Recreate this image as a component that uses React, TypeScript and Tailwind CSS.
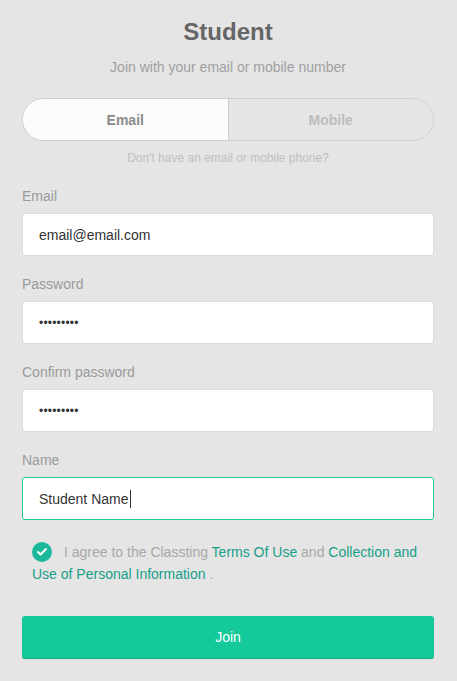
import { Check } from 'lucide-react'

const font = { fontFamily: '"Liberation Sans", Arial, sans-serif' }

function Field({
  label,
  value,
  type = 'text',
  focused = false,
}: {
  label: string
  value: string
  type?: string
  focused?: boolean
}) {
  return (
    <div className="mt-[18px] first:mt-[19px]">
      <label className="block text-[14px] leading-[20px] text-[#9a9a9a] mb-[7px]">{label}</label>
      <div
        className={`h-[43px] rounded-[3px] bg-white border flex items-center px-[16px] ${
          focused ? 'border-[#1fcb9c]' : 'border-[#dcdcdc]'
        }`}
      >
        {type === 'password' ? (
          <span className="text-[12px] text-[#333] tracking-[0.2px] leading-none pt-[1px]">•••••••••</span>
        ) : (
          <span className="text-[14px] text-[#333] flex items-center pt-[1px]">
            {value}
            {focused && <span className="inline-block w-px h-[18px] bg-[#333] ml-px" />}
          </span>
        )}
      </div>
    </div>
  )
}

export default function App() {
  return (
    <div className="min-h-[681px] bg-[#e5e5e5] pl-[22px] pr-[23px] pt-[16px] pb-[23px]" style={font}>
      <h1 className="text-center text-[24px] leading-[32px] font-bold text-[#666]">Student</h1>
      <p className="mt-[9px] text-center text-[14px] leading-[20px] text-[#a0a0a0]">
        Join with your email or mobile number
      </p>

      <div className="mt-[21px] h-[43px] flex rounded-full border border-[#cfcfcf] overflow-hidden">
        <button className="flex-1 bg-[#fcfcfc] text-[14px] font-bold text-[#8a8a8a] border-r border-[#cfcfcf] pt-[1px]">
          Email
        </button>
        <button className="flex-1 bg-[#e5e5e5] text-[14px] font-bold text-[#bcbcbc] pt-[1px]">Mobile</button>
      </div>

      <p className="mt-[8px] text-center text-[12px] leading-[18px] text-[#c0c0c0]">
        Don't have an email or mobile phone?
      </p>

      <div className="flex flex-col">
        <Field label="Email" value="email@email.com" />
        <Field label="Password" value="password" type="password" />
        <Field label="Confirm password" value="password" type="password" />
        <Field label="Name" value="Student Name" focused />
      </div>

      <p className="mt-[21px] pl-[10px] text-[14px] leading-[22px] text-[#a8a8a8]">
        <span className="inline-flex align-top relative top-[1px] items-center justify-center w-[20px] h-[20px] rounded-full bg-[#1bb89c] mr-[12px]">
          <Check className="w-[12px] h-[12px] text-white" strokeWidth={4} />
        </span>
        I agree to the Classting <span className="text-[#179f88]">Terms Of Use</span> and{' '}
        <span className="text-[#179f88]">Collection and Use of Personal Information</span> .
      </p>

      <button className="mt-[31px] w-full h-[43px] rounded-[3px] bg-[#14c99a] border-b border-[#10ad86] text-white text-[14px]">
        Join
      </button>
    </div>
  )
}
